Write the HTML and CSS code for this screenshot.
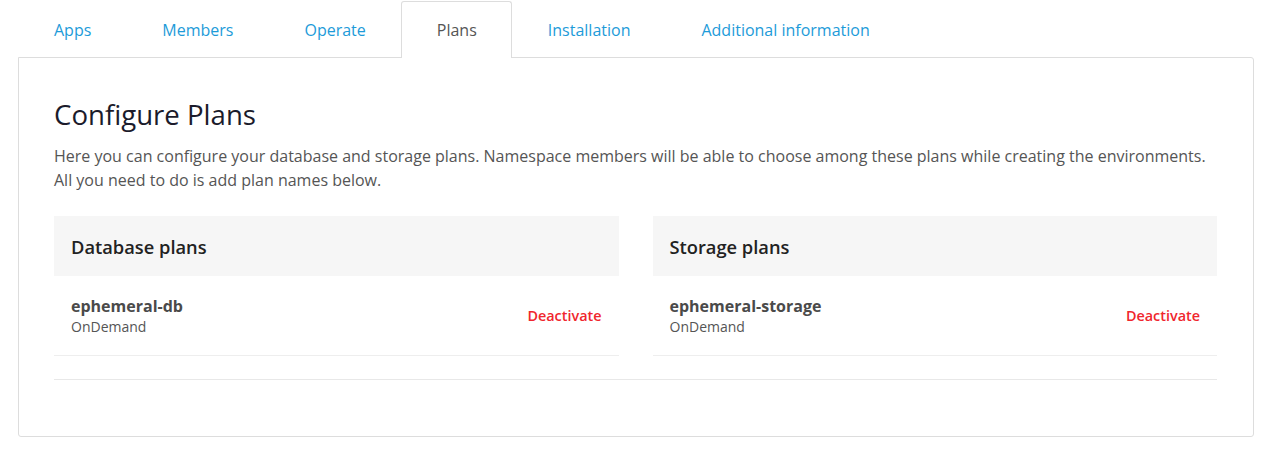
FILE: index.html
```html
<!DOCTYPE html>
<html>
<head>
<meta charset="utf-8">
<link rel="stylesheet" href="styles.css">
</head>
<body>
<div class="page">
  <nav class="tabs">
    <a class="tab">Apps</a>
    <a class="tab">Members</a>
    <a class="tab">Operate</a>
    <a class="tab active">Plans</a>
    <a class="tab">Installation</a>
    <a class="tab">Additional information</a>
  </nav>
  <section class="panel">
    <h1 class="title">Configure Plans</h1>
    <p class="intro">Here you can configure your database and storage plans. Namespace members will be able to choose among these plans while creating the environments.<br>All you need to do is add plan names below.</p>
    <div class="columns">
      <div class="plans">
        <div class="plans-head">Database plans</div>
        <div class="plan-row">
          <div class="plan-info">
            <div class="plan-name">ephemeral-db</div>
            <div class="plan-type">OnDemand</div>
          </div>
          <a class="deactivate">Deactivate</a>
        </div>
      </div>
      <div class="plans">
        <div class="plans-head">Storage plans</div>
        <div class="plan-row">
          <div class="plan-info">
            <div class="plan-name">ephemeral-storage</div>
            <div class="plan-type">OnDemand</div>
          </div>
          <a class="deactivate">Deactivate</a>
        </div>
      </div>
    </div>
    <hr class="divider">
  </section>
</div>
</body>
</html>
```
FILE: styles.css
```css
* { box-sizing: border-box; }
html, body { margin: 0; padding: 0; background: #fff; }
body {
  font-family: "Open Sans", "Noto Sans", sans-serif;
  color: #555;
}
.page {
  padding: 1px 14px 0 18px;
}
.tabs {
  display: flex;
  position: relative;
  z-index: 1;
  margin-bottom: -1px;
}
.tab {
  display: block;
  padding: 16px 34px 15px 35px;
  font-size: 16px;
  line-height: 24px;
  color: #1d9bd9;
  border: 1px solid transparent;
  border-bottom: none;
  border-radius: 3px 3px 0 0;
  cursor: pointer;
}
.tab.active {
  color: #555;
  background: #fff;
  border-color: #ddd;
  padding-bottom: 16px;
}
.panel {
  border: 1px solid #ddd;
  border-radius: 0 3px 3px 3px;
  padding: 36px 36px 57px 35px;
  height: 380px;
}
.title {
  margin: 0;
  font-size: 27.6px;
  font-weight: 400;
  line-height: 40px;
  color: #1b1b2b;
}
.intro {
  margin: 10px 0 0;
  font-size: 16px;
  line-height: 24px;
  color: #555;
}
.columns {
  display: grid;
  grid-template-columns: 1fr 1fr;
  gap: 34px;
  margin-top: 24px;
}
.plans-head {
  background: #f6f6f6;
  height: 60px;
  padding: 0 17px;
  display: flex;
  align-items: center;
  font-size: 18.3px;
  font-weight: 600;
  color: #222;
}
.plan-row {
  display: flex;
  align-items: center;
  justify-content: space-between;
  height: 80px;
  padding: 0 17px;
  border-bottom: 1px solid #eee;
}
.plan-name {
  font-size: 16px;
  font-weight: 700;
  line-height: 22px;
  color: #4a4a4a;
}
.plan-type {
  font-size: 14px;
  line-height: 20px;
  color: #555;
}
.deactivate {
  font-size: 14.4px;
  font-weight: 600;
  color: #f0262d;
  cursor: pointer;
}
.divider {
  border: none;
  border-top: 1px solid #e8e8e8;
  margin: 23px 0 0;
}
```
